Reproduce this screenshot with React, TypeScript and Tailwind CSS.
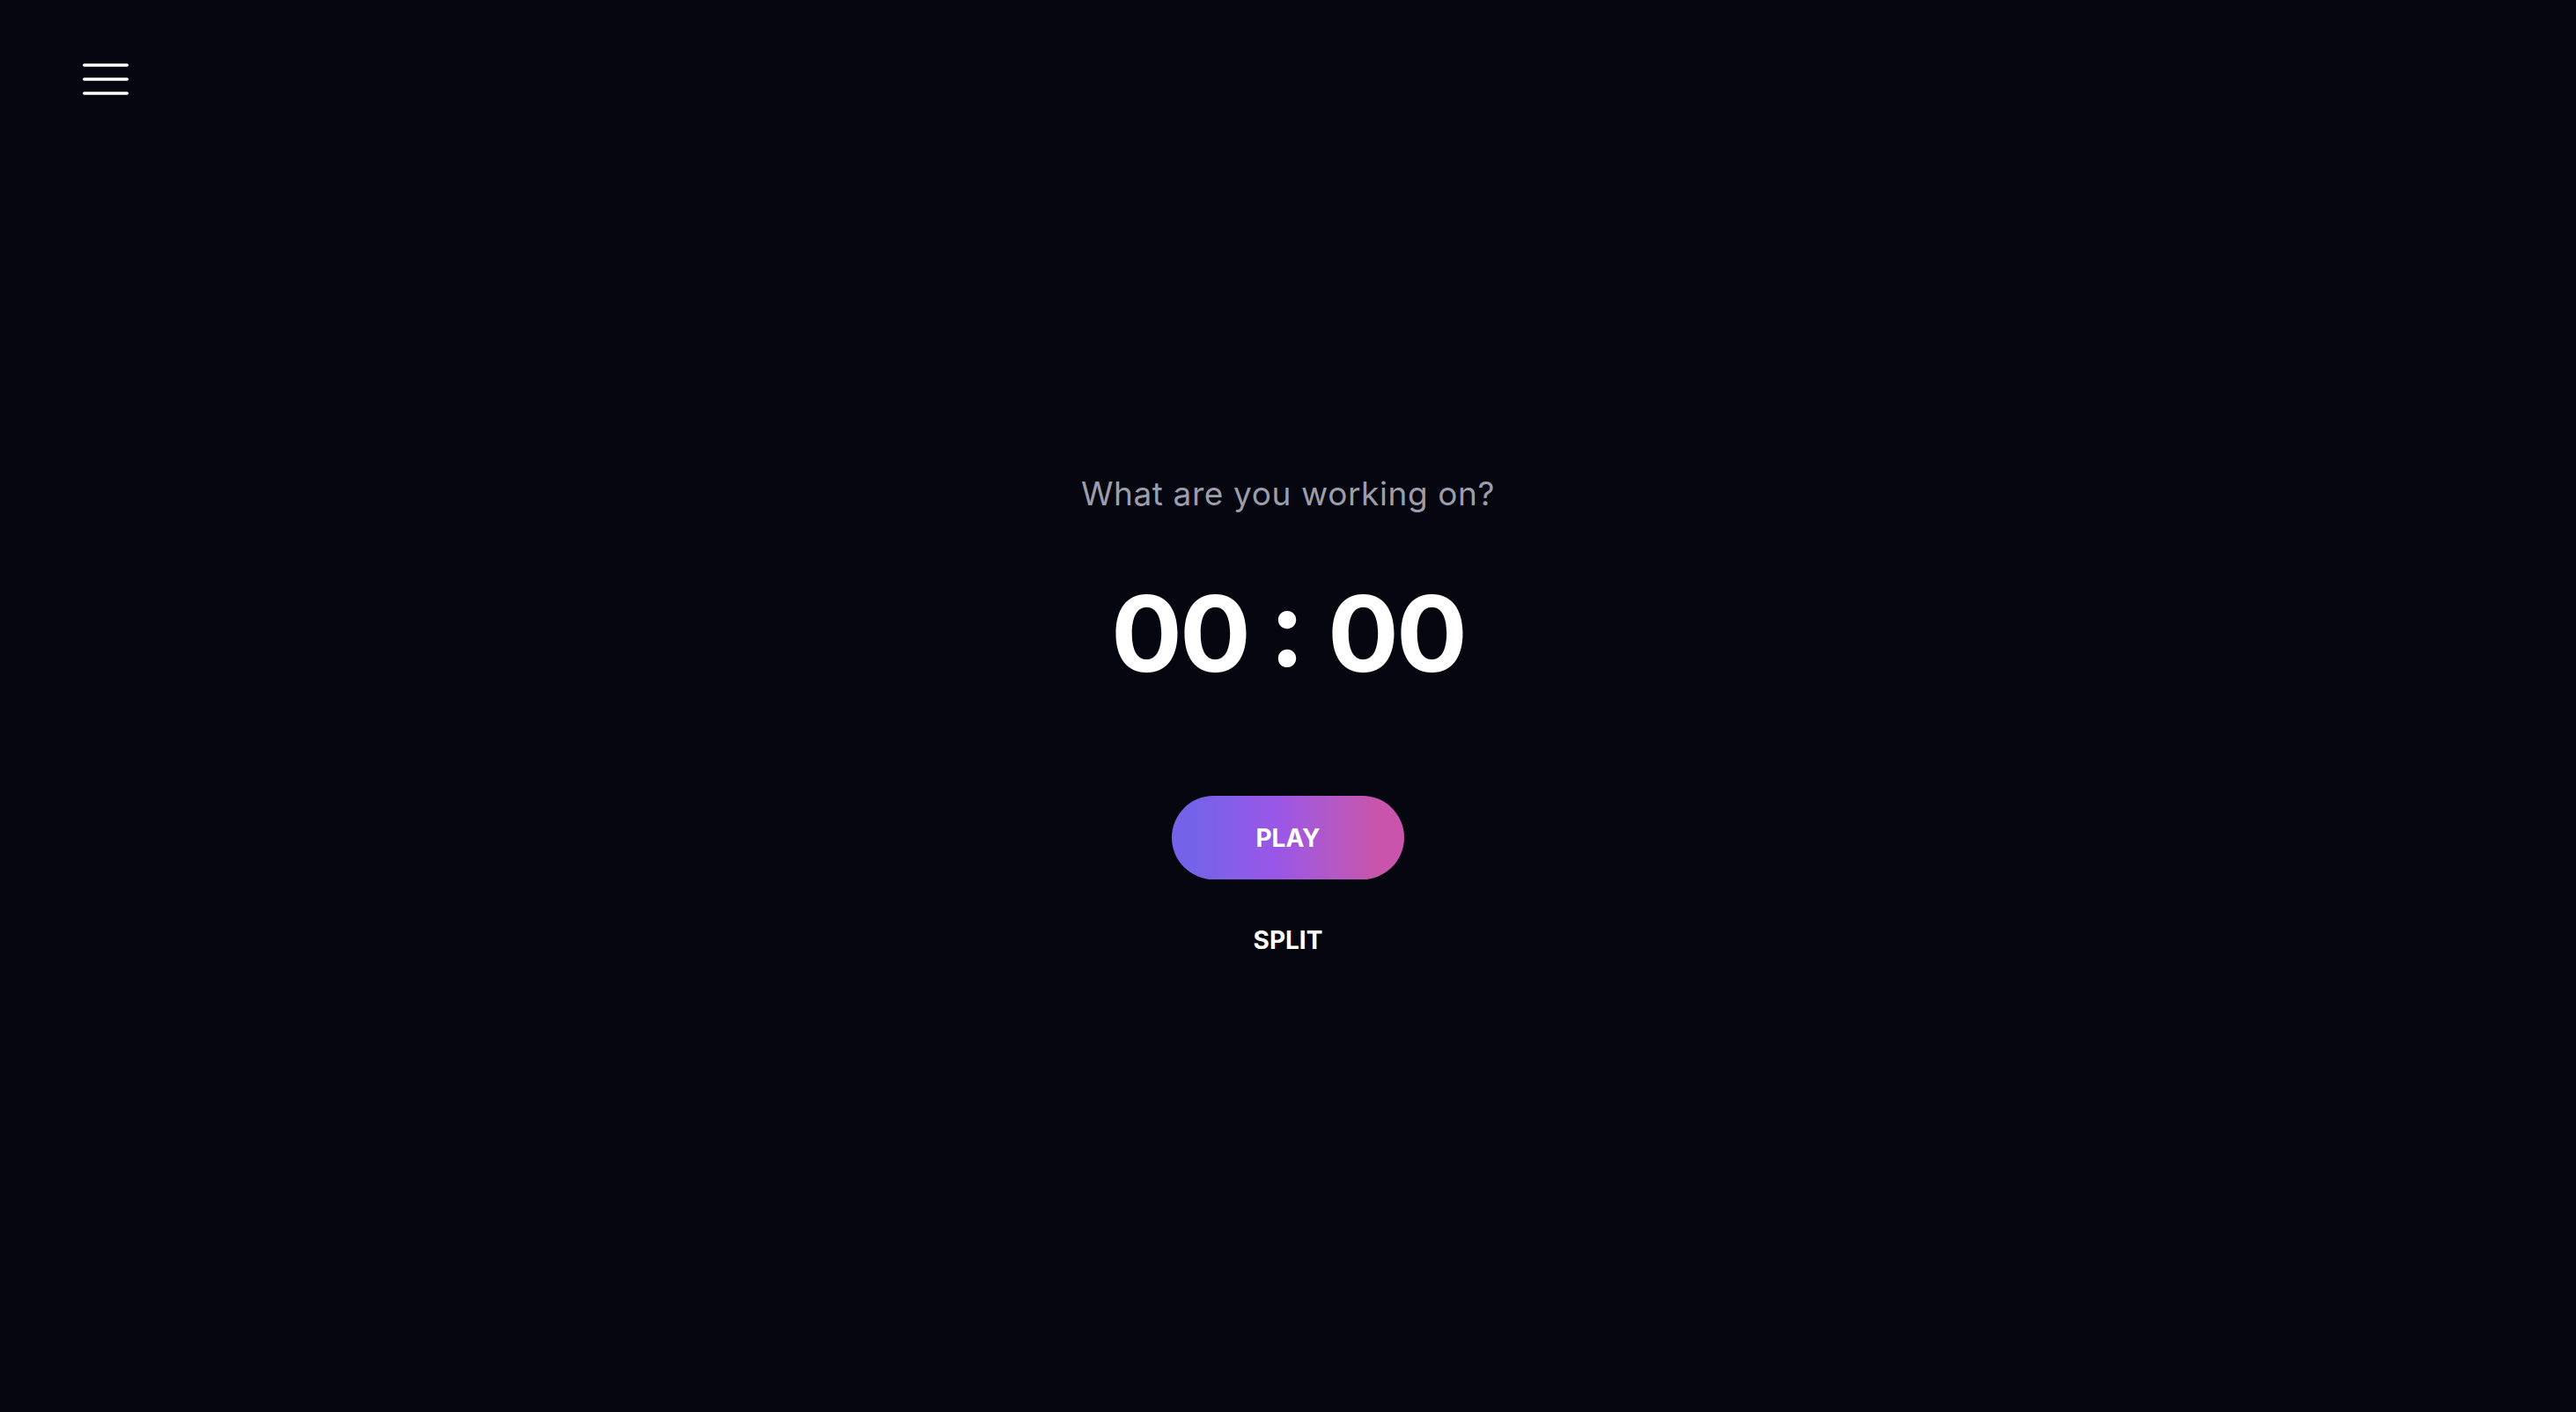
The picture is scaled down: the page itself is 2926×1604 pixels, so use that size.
import React from "react";

export default function App() {
  return (
    <div
      className="w-full h-[1604px] bg-[#05060f] flex flex-col overflow-hidden"
      style={{ fontFamily: "Inter, 'Noto Sans', sans-serif" }}
    >
      <header className="pl-[94px] pt-[72px]">
        <button className="block" aria-label="menu">
          <svg width="52" height="36" viewBox="0 0 52 36">
            <g stroke="#ffffff" strokeWidth="3.4" strokeLinecap="round">
              <line x1="1.7" y1="2" x2="50.3" y2="2" />
              <line x1="1.7" y1="18" x2="50.3" y2="18" />
              <line x1="1.7" y1="34" x2="50.3" y2="34" />
            </g>
          </svg>
        </button>
      </header>
      <main className="flex flex-col items-center pt-[430px]">
        <p className="text-[37px] leading-[46px] tracking-[0.6px] text-[#9b9dab]">What are you working on?</p>
        <div className="mt-[74px] flex items-center text-white font-bold text-[120px] leading-[124px]">
          <span className="tracking-[-3px]">00</span>
          <span className="ml-[24px] mr-[26px] relative -top-[6px]">:</span>
          <span className="tracking-[-3px]">00</span>
        </div>
        <button className="mt-[122px] w-[264px] h-[95px] rounded-full bg-gradient-to-r from-[#7463e8] from-10% via-[#9a56e7] via-45% to-[#c855ab] to-88% text-white font-bold text-[28px] leading-[34px]">
          PLAY
        </button>
        <button className="mt-[52px] text-white font-bold text-[28px] leading-[34px]">SPLIT</button>
      </main>
    </div>
  );
}
